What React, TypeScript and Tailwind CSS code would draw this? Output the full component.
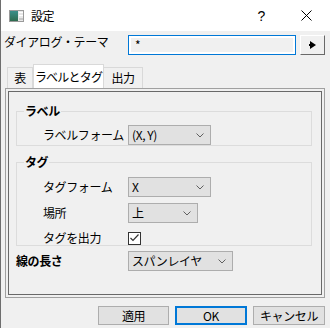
import { ReactNode } from 'react'

const font = { fontFamily: '"Noto Sans CJK JP", "Noto Sans", sans-serif' }

function Chevron() {
  return (
    <svg width="8" height="5" viewBox="0 0 8 5" className="shrink-0">
      <polyline points="0.5,0.5 4,4 7.5,0.5" fill="none" stroke="#606060" strokeWidth="1" />
    </svg>
  )
}

function Select({ value, w }: { value: string; w: string }) {
  return (
    <div className={`${w} h-[20px] bg-[#e1e1e1] border border-[#adadad] flex items-center justify-between pl-[3px] pr-[6px]`}>
      <span className="leading-[16px] whitespace-pre">{value}</span>
      <Chevron />
    </div>
  )
}

function Row({ label, children, cls = 'mt-[6px]' }: { label: string; children: ReactNode; cls?: string }) {
  return (
    <div className={`flex items-center h-[20px] ${cls}`}>
      <span className="ml-[26px] w-[85px] leading-[16px] whitespace-nowrap">{label}</span>
      {children}
    </div>
  )
}

export default function App() {
  return (
    <div style={font} className="w-[330px] h-[328px] bg-[#f0f0f0] border-l border-[#6e6e6e] flex flex-col overflow-hidden text-[12px] text-black tracking-[-0.4px]">
      {/* title bar */}
      <div className="h-[31px] bg-white flex items-center shrink-0">
        <svg width="15" height="12" viewBox="0 0 15 12" className="ml-[8px]">
          <defs>
            <linearGradient id="ic" x1="0" y1="0" x2="0" y2="1">
              <stop offset="0" stopColor="#3a8f8a" />
              <stop offset="1" stopColor="#2e6b4f" />
            </linearGradient>
          </defs>
          <rect x="0.5" y="0.5" width="14" height="11" fill="#e8e8e8" stroke="#9a9a9a" />
          <rect x="1" y="1" width="8" height="10" fill="url(#ic)" />
          <rect x="10" y="2" width="4" height="1" fill="#ffffff" />
          <rect x="10" y="5" width="4" height="1" fill="#ffffff" />
          <rect x="10" y="8" width="4" height="2" fill="#c8c8c8" />
        </svg>
        <span className="ml-[7px] leading-[16px]">設定</span>
        <span className="ml-auto text-[14px] leading-[16px]" style={{ fontFamily: '"Liberation Sans", sans-serif' }}>?</span>
        <svg width="11" height="11" viewBox="0 0 11 11" className="ml-[36px] mr-[18px]">
          <line x1="0.5" y1="0.5" x2="10.5" y2="10.5" stroke="#000" strokeWidth="1" />
          <line x1="10.5" y1="0.5" x2="0.5" y2="10.5" stroke="#000" strokeWidth="1" />
        </svg>
      </div>

      {/* theme row */}
      <div className="mt-[2px] h-[22px] flex items-start shrink-0">
        <span className="ml-[3px] w-[124px] mt-[1px] leading-[16px] whitespace-nowrap">ダイアログ・テーマ</span>
        <div className="w-[168px] h-[20px] mt-[2px] border border-[#0078d7] bg-white p-[2px]">
          <div className="h-full bg-[#f0f0f0] pl-[4px] flex items-center leading-[14px]">*</div>
        </div>
        <div className="ml-[4px] w-[25px] h-[20px] mt-[2px] bg-[#f0f0f0] border border-t-white border-l-white border-r-[#696969] border-b-[#696969] flex items-center justify-center">
          <svg width="7" height="8" viewBox="0 0 7 8">
            <rect x="0" y="3" width="2" height="2" fill="#000" />
            <polygon points="1,0 7,4 1,8" fill="#000" />
          </svg>
        </div>
      </div>

      {/* tabs */}
      <div className="mt-[9px] ml-[6px] h-[24px] flex items-end shrink-0">
        <div className="w-[26px] h-[21px] border border-b-0 border-[#d9d9d9] flex items-center justify-center leading-[16px]">表</div>
        <div className="w-[71px] h-[24px] bg-white border border-b-0 border-[#d9d9d9] flex items-center justify-center leading-[16px] whitespace-nowrap tracking-[-0.8px]">ラベルとタグ</div>
        <div className="w-[39px] h-[21px] border border-b-0 border-l-0 border-[#d9d9d9] flex items-center justify-center leading-[16px]">出力</div>
      </div>

      {/* panel */}
      <div className="ml-[4px] w-[320px] h-[210px] border border-[#a0a0a0] p-[2px] flex shrink-0">
        <div className="flex-1 border border-[#696969] flex flex-col">
          <fieldset className="ml-[7px] w-[296px] mt-[11px] border border-[#dcdcdc]">
            <legend className="ml-[7px] px-[1px] font-bold leading-[16px]">ラベル</legend>
            <Row label="ラベルフォーム">
              <Select value="(X, Y)" w="w-[83px]" />
            </Row>
          </fieldset>

          <fieldset className="ml-[7px] w-[296px] mt-[8px] border border-[#dcdcdc]">
            <legend className="ml-[7px] px-[1px] font-bold leading-[16px]">タグ</legend>
            <Row label="タグフォーム" cls="mt-[7px]">
              <Select value="X" w="w-[83px]" />
            </Row>
            <Row label="場所">
              <Select value="上" w="w-[70px]" />
            </Row>
            <div className="flex items-center h-[14px] mt-[8px]">
              <span className="ml-[26px] w-[85px] leading-[16px] whitespace-nowrap">タグを出力</span>
              <div className="w-[13px] h-[13px] border border-[#333333] bg-white flex items-center justify-center">
                <svg width="9" height="8" viewBox="0 0 9 8">
                  <polyline points="0.5,4 3,6.5 8.5,0.5" fill="none" stroke="#333" strokeWidth="1.2" />
                </svg>
              </div>
            </div>
          </fieldset>

          <div className="flex items-center h-[20px] mt-[5px]">
            <span className="ml-[7px] w-[112px] font-bold leading-[16px]">線の長さ</span>
            <Select value="スパンレイヤ" w="w-[105px]" />
          </div>
        </div>
      </div>

      {/* buttons */}
      <div className="mt-[8px] flex justify-end gap-[6px] pr-[5px] shrink-0">
        {[
          { label: '適用', w: 'w-[71px]', cls: 'border border-[#adadad]' },
          { label: 'OK', w: 'w-[72px]', cls: 'border-2 border-[#0078d7]' },
          { label: 'キャンセル', w: 'w-[72px]', cls: 'border border-[#adadad]' },
        ].map(b => (
          <div key={b.label} className={`${b.w} h-[19px] bg-[#e1e1e1] ${b.cls} flex items-center justify-center leading-[16px]`}>
            {b.label}
          </div>
        ))}
      </div>
    </div>
  )
}
